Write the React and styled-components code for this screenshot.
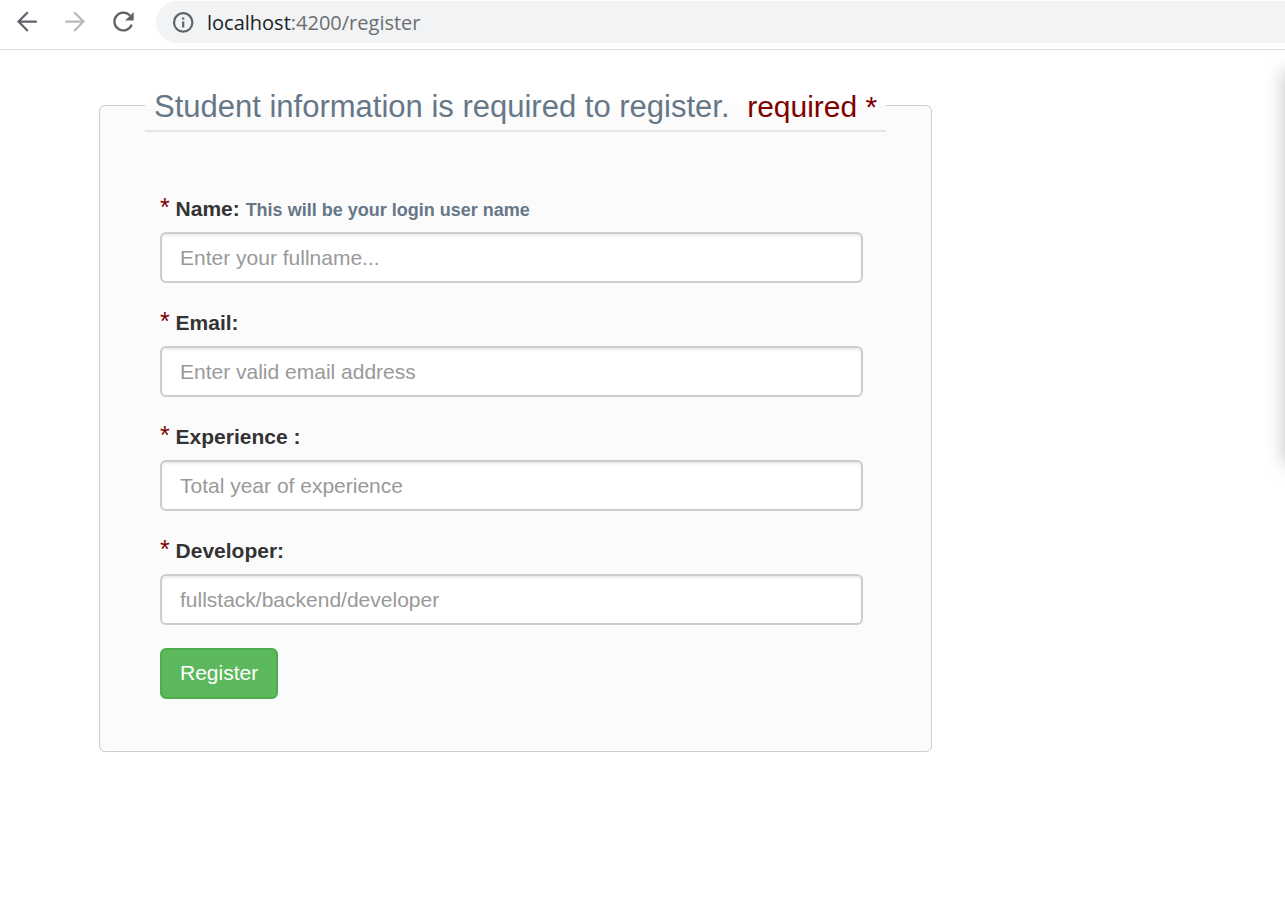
import React from "react";
import styled, { createGlobalStyle } from "styled-components";

const GlobalStyle = createGlobalStyle`
  *, *::before, *::after { box-sizing: border-box; }
  body {
    margin: 0;
    background: #fff;
    color: #333;
    font-family: "Liberation Sans", Arial, sans-serif;
    font-size: 21px;
    line-height: 30px;
  }
`;

const Page = styled.div`
  position: relative;
  min-height: 100vh;
  overflow: hidden;
`;

const BrowserBar = styled.header`
  display: flex;
  align-items: center;
  gap: 18px;
  height: 50px;
  padding: 0 0 6px 12px;
  border-bottom: 1px solid #dadce0;
`;

const NavButton = styled.button`
  display: flex;
  padding: 0;
  border: 0;
  background: none;
  color: ${(p) => (p.disabled ? "#bababa" : "#5f6368")};
`;

const AddressBar = styled.div`
  display: flex;
  flex: 1;
  align-items: center;
  gap: 12px;
  height: 42px;
  padding-left: 15px;
  border-radius: 21px 0 0 21px;
  background: #f1f3f4;
  color: #5f6368;
`;

const Url = styled.span`
  color: #6b6e72;
  font-family: "Open Sans", "Noto Sans", sans-serif;
  font-size: 20px;
  line-height: 30px;
  padding-top: 2px;
`;

const Host = styled.span`
  color: #202124;
`;

const Content = styled.main`
  padding: 29px 24px 24px 99px;
`;

const Panel = styled.fieldset`
  max-width: 833px;
  min-width: 0;
  margin: 0;
  padding: 60px 44px 52px 45px;
  border: 1px solid #ccc;
  border-radius: 6px;
  background: #fbfbfb;
`;

const Title = styled.legend`
  padding: 5px 9px 1px;
  border-bottom: 2px solid #e5e5e5;
  color: #678;
  font-size: 31px;
  line-height: 45px;
`;

const Required = styled.span`
  margin-left: 9px;
  color: maroon;
  font-size: 30px;
`;

const Form = styled.form`
  display: flex;
  flex-direction: column;
  align-items: flex-start;
  padding: 0 24px 0 15px;
`;

const Field = styled.div`
  width: 100%;
  margin-bottom: 23px;
`;

const Label = styled.label`
  display: block;
  margin-bottom: 6px;
  color: #333;
  font-weight: bold;
  line-height: 34px;
`;

const Star = styled.span`
  color: maroon;
  font-size: 25px;
  font-weight: normal;
  line-height: 1;
`;

const Hint = styled.small`
  color: #678;
  font-size: 18px;
  line-height: 1;
`;

const TextInput = styled.input`
  display: block;
  width: 100%;
  height: 51px;
  padding: 8px 18px;
  border: 2px solid #ccc;
  border-radius: 6px;
  background: #fff;
  box-shadow: inset 0 2px 2px rgba(0, 0, 0, 0.075);
  color: #555;
  font: inherit;

  &::placeholder {
    color: #999;
    opacity: 1;
  }
`;

const SubmitButton = styled.button`
  height: 51px;
  padding: 0 18px 2px;
  border: 2px solid #4cae4c;
  border-radius: 6px;
  background: #5cb85c;
  color: #fff;
  font: inherit;
`;

const SidePanel = styled.aside`
  position: absolute;
  top: 70px;
  left: 100%;
  width: 200px;
  height: 394px;
  background: #fff;
  box-shadow: 0 0 18px rgba(0, 0, 0, 0.25);
`;

const ArrowIcon = ({ flip }) => (
  <svg width="30" height="30" viewBox="0 0 30 30" fill="none" stroke="currentColor" strokeWidth="2.2">
    <g transform={flip ? "translate(30 0) scale(-1 1)" : undefined}>
      <path d="M24.8 14.6H7M15.8 5.2L6.5 14.6l9.3 9.4" />
    </g>
  </svg>
);

const ReloadIcon = () => (
  <svg width="30" height="30" viewBox="0 0 30 30" fill="none">
    <path d="M23.7 17.6A8.9 8.9 0 1 1 22 8.6" stroke="currentColor" strokeWidth="2.3" />
    <path d="M25.7 5v8.6h-8.6z" fill="currentColor" />
  </svg>
);

const InfoIcon = () => (
  <svg width="24" height="24" viewBox="0 0 24 24" fill="none">
    <circle cx="12.2" cy="12.4" r="9.2" stroke="currentColor" strokeWidth="2.2" />
    <path d="M11.1 7.4h2.2v2.2h-2.2zM11.1 11.4h2.2v6h-2.2z" fill="currentColor" />
  </svg>
);

const fields = [
  { id: "name", label: "Name:", hint: "This will be your login user name", placeholder: "Enter your fullname..." },
  { id: "email", label: "Email:", placeholder: "Enter valid email address", type: "email" },
  { id: "experience", label: "Experience :", placeholder: "Total year of experience" },
  { id: "developer", label: "Developer:", placeholder: "fullstack/backend/developer" },
];

export default function App() {
  return (
    <Page>
      <GlobalStyle />
      <BrowserBar>
        <NavButton aria-label="Back"><ArrowIcon /></NavButton>
        <NavButton aria-label="Forward" disabled><ArrowIcon flip /></NavButton>
        <NavButton aria-label="Reload"><ReloadIcon /></NavButton>
        <AddressBar>
          <InfoIcon />
          <Url><Host>localhost</Host>:4200/register</Url>
        </AddressBar>
      </BrowserBar>
      <Content>
        <Panel>
          <Title>
            Student information is required to register. <Required>required *</Required>
          </Title>
          <Form onSubmit={(e) => e.preventDefault()}>
            {fields.map((f) => (
              <Field key={f.id}>
                <Label htmlFor={f.id}>
                  <Star>*</Star> {f.label} {f.hint && <Hint>{f.hint}</Hint>}
                </Label>
                <TextInput id={f.id} name={f.id} type={f.type || "text"} placeholder={f.placeholder} />
              </Field>
            ))}
            <SubmitButton type="submit">Register</SubmitButton>
          </Form>
        </Panel>
      </Content>
      <SidePanel aria-hidden="true" />
    </Page>
  );
}
